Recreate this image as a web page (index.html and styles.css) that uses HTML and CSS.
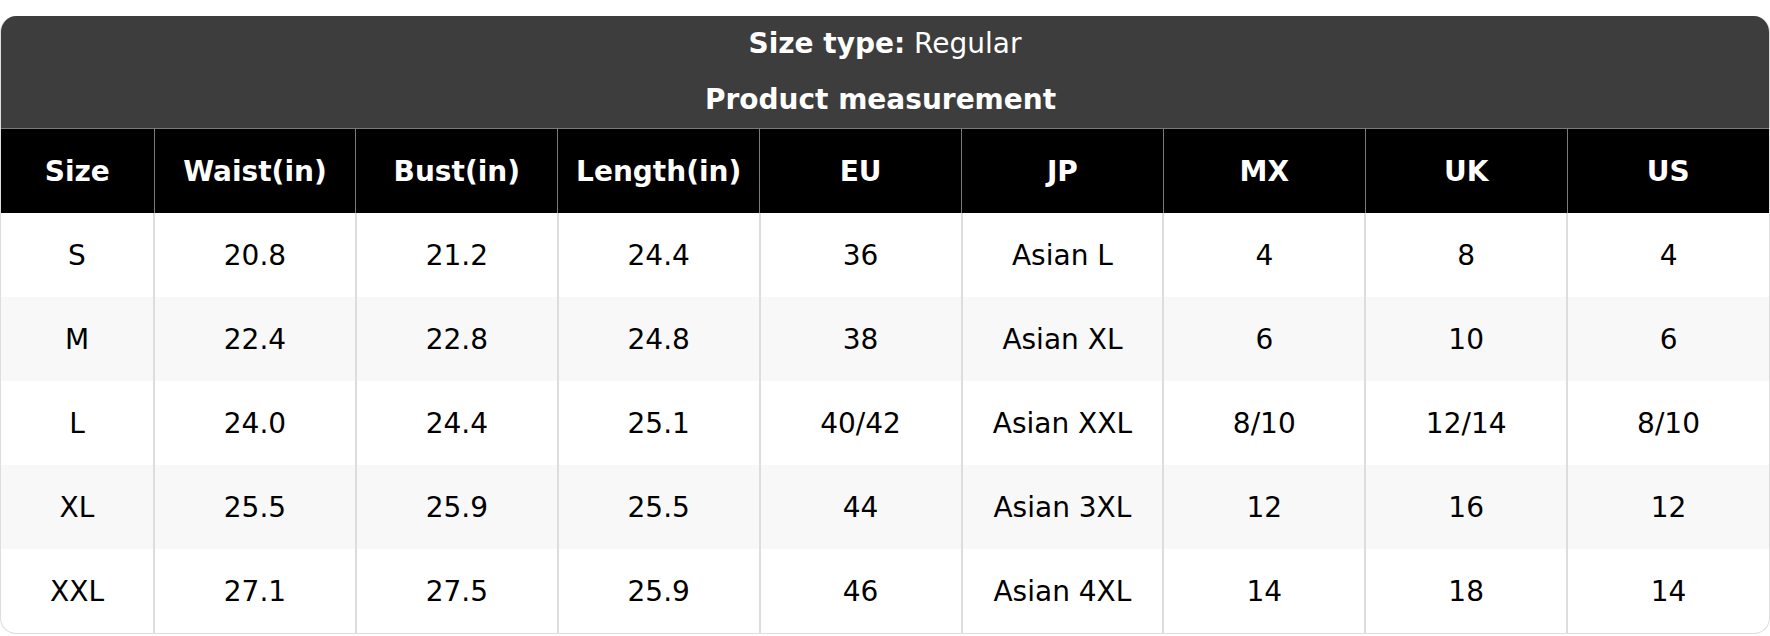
FILE: index.html
```html
<!DOCTYPE html>
<html>
<head>
<meta charset="utf-8">
<link rel="stylesheet" href="styles.css">
</head>
<body>
<div class="card">
  <div class="band">
    <div class="band-line"><b>Size type:</b> Regular</div>
    <div class="band-line band-title"><b>Product measurement</b></div>
  </div>
  <table class="sizes">
    <colgroup>
      <col class="c-first">
      <col span="8">
    </colgroup>
    <thead>
      <tr><th>Size</th><th>Waist(in)</th><th>Bust(in)</th><th>Length(in)</th><th>EU</th><th>JP</th><th>MX</th><th>UK</th><th>US</th></tr>
    </thead>
    <tbody>
      <tr><td>S</td><td>20.8</td><td>21.2</td><td>24.4</td><td>36</td><td>Asian L</td><td>4</td><td>8</td><td>4</td></tr>
      <tr><td>M</td><td>22.4</td><td>22.8</td><td>24.8</td><td>38</td><td>Asian XL</td><td>6</td><td>10</td><td>6</td></tr>
      <tr><td>L</td><td>24.0</td><td>24.4</td><td>25.1</td><td>40/42</td><td>Asian XXL</td><td>8/10</td><td>12/14</td><td>8/10</td></tr>
      <tr><td>XL</td><td>25.5</td><td>25.9</td><td>25.5</td><td>44</td><td>Asian 3XL</td><td>12</td><td>16</td><td>12</td></tr>
      <tr><td>XXL</td><td>27.1</td><td>27.5</td><td>25.9</td><td>46</td><td>Asian 4XL</td><td>14</td><td>18</td><td>14</td></tr>
    </tbody>
  </table>
</div>
</body>
</html>
```
FILE: styles.css
```css
html, body {
  margin: 0;
  padding: 0;
  background: #ffffff;
}
body {
  padding-top: 16px;
  font-family: "DejaVu Sans", Verdana, sans-serif;
  font-size: 28px;
  color: #000;
}
.card {
  border: 1px solid #dddddd;
  border-top: none;
  border-radius: 16px;
  overflow: hidden;
  box-sizing: border-box;
  height: 618px;
}
.band {
  background: #3d3d3d;
  color: #ffffff;
  text-align: center;
}
.band-line {
  padding: 12px 0;
  line-height: 32px;
}
.band-title {
  padding-right: 9px;
}
.band b {
  font-weight: bold;
}
.sizes {
  width: 100%;
  border-collapse: collapse;
  table-layout: fixed;
}
.c-first {
  width: 153px;
}
.sizes th {
  background: #000000;
  color: #ffffff;
  font-weight: bold;
  height: 84px;
  padding: 2px 0 0;
  border-top: 1px solid #7a7a7a;
  border-left: 1px solid #7a7a7a;
  text-align: center;
  box-sizing: border-box;
}
.sizes th:first-child,
.sizes td:first-child {
  border-left: none;
}
.sizes td {
  height: 84px;
  padding: 2px 0 0;
  text-align: center;
  border-left: 2px solid #dddddd;
  box-sizing: border-box;
}
.sizes tbody tr:nth-child(even) td {
  background: #f8f8f8;
}
```
